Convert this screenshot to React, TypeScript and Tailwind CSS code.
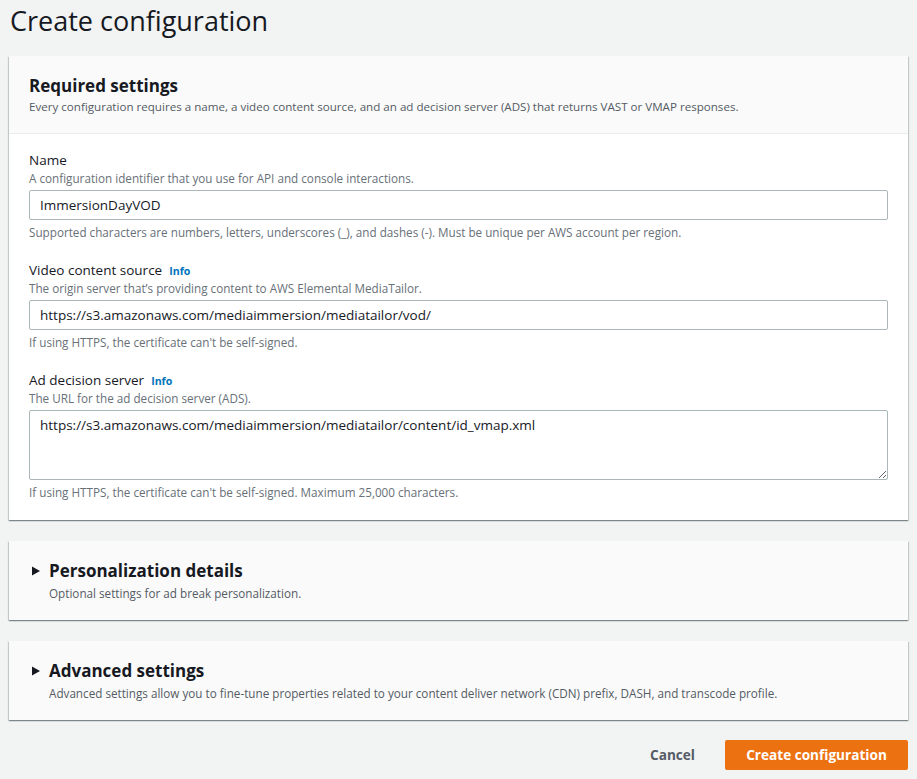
import { useState } from 'react';

const font = { fontFamily: '"Open Sans", "Liberation Sans", Arial, sans-serif' };

function Field({
  label,
  info,
  description,
  hint,
  last,
  children,
}: {
  label: string;
  info?: boolean;
  description: string;
  hint: string;
  last?: boolean;
  children: React.ReactNode;
}) {
  return (
    <div className={last ? '' : 'mb-[20px]'}>
      <div className="flex h-[20px] items-center gap-[7px] text-[13.5px] leading-[20px] text-[#16191f]">
        <span>{label}</span>
        {info && <span className="pt-[1px] text-[10.6px] font-bold text-[#0073bb]">Info</span>}
      </div>
      <div className="text-[11.7px] leading-[16px] text-[#687078]">{description}</div>
      <div className="mt-[4px]">{children}</div>
      <div className="mt-[4px] text-[11.7px] leading-[16px] text-[#687078]">{hint}</div>
    </div>
  );
}

function Collapsed({ title, description }: { title: string; description: string }) {
  return (
    <div className="mt-[21px] bg-[#fafafa] px-[23px] pt-[19px] pb-[19px] shadow-[0_1px_1px_0_rgba(0,28,36,0.3),1px_1px_1px_0_rgba(0,28,36,0.15),-1px_1px_1px_0_rgba(0,28,36,0.15)]">
      <div className="flex items-center gap-[9px]">
        <svg width="8" height="10" viewBox="0 0 8 10">
          <path d="M0 0.5 L8 5 L0 9.5 Z" fill="#16191f" />
        </svg>
        <span className="text-[17px] font-bold leading-[22px] text-[#16191f]">{title}</span>
      </div>
      <div className="ml-[17px] mt-[3px] text-[11.7px] leading-[16px] text-[#545b64]">{description}</div>
    </div>
  );
}

export default function App() {
  const [name, setName] = useState('ImmersionDayVOD');
  const [source, setSource] = useState('https://s3.amazonaws.com/mediaimmersion/mediatailor/vod/');
  const [ads, setAds] = useState('https://s3.amazonaws.com/mediaimmersion/mediatailor/content/id_vmap.xml');

  const inputCls =
    'block w-full h-[30px] rounded-[2px] border border-[#aab7b8] bg-white px-[10px] text-[13.5px] text-[#16191f] outline-none';

  return (
    <div className="min-h-[779px] w-[917px] bg-[#f2f3f3] px-[9px]" style={font}>
      <h1 className="pl-[1px] pt-[2px] text-[27px] font-normal leading-[38px] text-[#16191f]">Create configuration</h1>

      <div className="mt-[16px] bg-white shadow-[0_1px_1px_0_rgba(0,28,36,0.3),1px_1px_1px_0_rgba(0,28,36,0.15),-1px_1px_1px_0_rgba(0,28,36,0.15)]">
        <div className="border-b border-[#eaeded] bg-[#fafafa] px-[20px] pt-[19px] pb-[18px]">
          <div className="text-[17px] font-bold leading-[22px] text-[#16191f]">Required settings</div>
          <div className="mt-[2px] text-[11.6px] leading-[16px] text-[#545b64]">
            Every configuration requires a name, a video content source, and an ad decision server (ADS) that returns VAST or VMAP responses.
          </div>
        </div>
        <div className="px-[20px] pt-[16px] pb-[20px]">
          <Field
            label="Name"
            description="A configuration identifier that you use for API and console interactions."
            hint="Supported characters are numbers, letters, underscores (_), and dashes (-). Must be unique per AWS account per region."
          >
            <input className={inputCls} value={name} onChange={(e) => setName(e.target.value)} />
          </Field>
          <Field
            label="Video content source"
            info
            description="The origin server that’s providing content to AWS Elemental MediaTailor."
            hint="If using HTTPS, the certificate can't be self-signed."
          >
            <input className={inputCls} value={source} onChange={(e) => setSource(e.target.value)} />
          </Field>
          <Field
            label="Ad decision server"
            info
            last
            description="The URL for the ad decision server (ADS)."
            hint="If using HTTPS, the certificate can't be self-signed. Maximum 25,000 characters."
          >
            <textarea
              className="block h-[70px] w-full rounded-[2px] border border-[#aab7b8] bg-white px-[10px] py-[4px] text-[13.5px] leading-[20px] text-[#16191f] outline-none"
              value={ads}
              onChange={(e) => setAds(e.target.value)}
            />
          </Field>
        </div>
      </div>

      <Collapsed title="Personalization details" description="Optional settings for ad break personalization." />
      <Collapsed
        title="Advanced settings"
        description="Advanced settings allow you to fine-tune properties related to your content deliver network (CDN) prefix, DASH, and transcode profile."
      />

      <div className="mt-[20px] flex items-center justify-end gap-[12px]">
        <button className="px-[18px] py-[4px] text-[13.6px] font-bold leading-[22px] text-[#545b64]">Cancel</button>
        <button className="h-[30px] w-[183px] rounded-[2px] bg-[#ec7211] text-[13.6px] font-bold text-white">
          Create configuration
        </button>
      </div>
    </div>
  );
}
